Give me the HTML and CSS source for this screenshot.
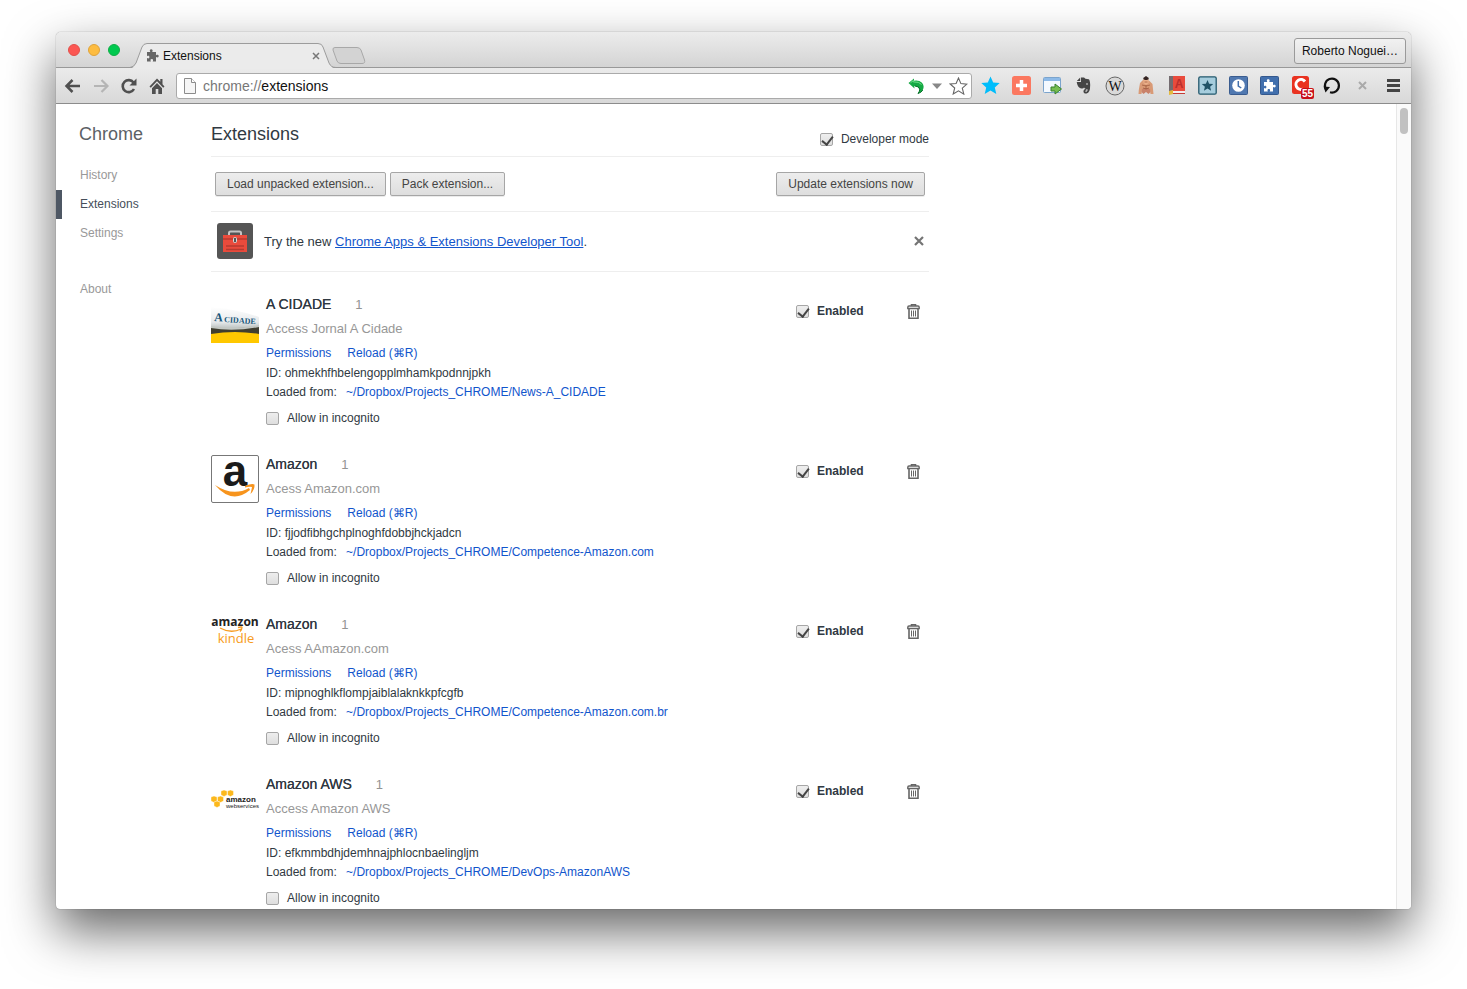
FILE: index.html
```html
<!DOCTYPE html>
<html lang="en">
<head>
<meta charset="utf-8">
<title>Extensions</title>
<link rel="stylesheet" href="styles.css">
</head>
<body>
<svg class="defs" aria-hidden="true">
  <symbol id="trash" viewBox="0 0 13 15">
    <path d="M4.500 2V.8h4V2M2 5v9.200h9V5" fill="none" stroke="#666" stroke-width="1.600"/>
    <path d="M.8 4.500V3.200Q.8 2 2 2h9q1.200 0 1.200 1.200v1.300z" fill="#fff" stroke="#666" stroke-width="1.400"/>
    <path d="M4.500 6.500v6M6.500 6.500v6M8.500 6.500v6" stroke="#666"/>
  </symbol>
  <symbol id="puzzle" viewBox="0 0 13 13">
    <path d="M1 3h3.300C3.300 1.200 4 .3 5.200.3S7.200 1.200 6.200 3H10v3.200c1.800-1 2.700-.3 2.700.9S11.800 9 10 8v4.500H6.700c.9-1.700.2-2.500-.9-2.500s-1.800.8-.9 2.500H1V9c1.700.9 2.400.2 2.400-.9S2.700 6.300 1 7.200z"/>
  </symbol>
</svg>
<div class="window">
  <header class="tabstrip">
    <div class="lights"><i class="light red"></i><i class="light amber"></i><i class="light green"></i></div>
    <div class="tab">
      <svg class="tab-shape" viewBox="0 0 206 26" aria-hidden="true"><path d="M0 25.500Q4 25 6 20L12 4Q13.500.5 17 .5H188Q192 .5 193 4L199 20Q201 25 206 25.500V26H0z" fill="#ebebeb"/><path d="M0 24.500Q4 24 6 20L12 4Q13.500.5 17 .5H188Q192 .5 193 4L199 20Q201 24.500 206 24.500" fill="none" stroke="#9c9c9c"/></svg>
      <svg class="tab-icon" width="13" height="13" fill="#666" aria-hidden="true"><use href="#puzzle"/></svg>
      <span class="tab-title">Extensions</span>
      <button class="tab-close" aria-label="Close tab"><svg width="8" height="8" viewBox="0 0 8 8"><path d="M1 1l6 6M7 1L1 7" stroke="#777" stroke-width="1.500"/></svg></button>
    </div>
    <button class="new-tab" aria-label="New tab"><svg width="34" height="17" viewBox="0 0 34 17"><path d="M3 .5H25Q28 .5 29 3L32.500 13Q33.500 16.500 30 16.500H9Q6 16.500 5 14L1 3Q.5.500 3 .5z" fill="#d3d3d3" stroke="#a8a8a8"/></svg></button>
    <button class="profile">Roberto Noguei…</button>
  </header>

  <nav class="toolbar" aria-label="Toolbar">
    <button class="nav-btn" aria-label="Back"><svg width="18" height="16" viewBox="0 0 18 16"><path d="M16 8H3M8.500 2L2.500 8l6 6" fill="none" stroke="#505050" stroke-width="2.500"/></svg></button>
    <button class="nav-btn" aria-label="Forward"><svg width="18" height="16" viewBox="0 0 18 16"><path d="M2 8h13M9.500 2l6 6-6 6" fill="none" stroke="#b5b5b5" stroke-width="2.200"/></svg></button>
    <button class="nav-btn" aria-label="Reload"><svg width="18" height="16" viewBox="0 0 18 16"><path d="M14 11a6 6 0 1 1-.5-6.500" fill="none" stroke="#505050" stroke-width="2.600"/><path d="M16.500.5v7h-7z" fill="#505050"/></svg></button>
    <button class="nav-btn" aria-label="Home"><svg width="18" height="16" viewBox="0 0 18 16"><path d="M9 .5L1.500 8.500l1.300 1.200L9 3.200l6.200 6.500 1.300-1.200-2-2.200V1h-2.200v2.800zM9 5L4 10.200V16h3.700v-5h2.600v5H14v-5.800z" fill="#505050"/></svg></button>
    <div class="omnibox">
      <svg width="12" height="16" viewBox="0 0 12 16" aria-hidden="true"><path d="M.5.500h7l4 4v11H.5z" fill="#f6f6f6" stroke="#8c8c8c"/><path d="M7.500.5v4h4" fill="#fff" stroke="#8c8c8c"/></svg>
      <a class="url" href="#extensions"><span>chrome://</span>extensions</a>
      <button class="box-btn" aria-label="Undo"><svg width="17" height="16" viewBox="0 0 17 16"><path d="M.5 5L6 .5v2.300q5-.8 8 2 2.800 3.200.8 7.200-1.500 2.700-4.800 3.500 2-2.300 1.300-4.500Q10.300 8 6.300 8l.2 2.500z" fill="#15a944"/><path d="M2.500 4.800L5.300 2.500v1.400q6-.5 8.200 2.600" fill="none" stroke="#74e08c"/><path d="M7 8q4 .2 4.800 3.200-.2 2.500-1.800 4.300 3.500-1 4.800-3.500" fill="none" stroke="#077028"/></svg></button>
      <button class="box-btn" aria-label="Show more"><svg width="10" height="6" viewBox="0 0 10 6"><path d="M0 .5h10L5 6z" fill="#888"/></svg></button>
      <button class="box-btn" aria-label="Bookmark this page"><svg width="19" height="18" viewBox="0 0 19 18"><path d="M9.500 1l2.400 5.600 6 .5-4.600 4 1.500 6-5.300-3.300L4.200 17l1.500-6-4.600-4 6-.5z" fill="#fff" stroke="#666" stroke-width="1.100"/></svg></button>
    </div>
    <div class="actions">
      <button aria-label="Favorite"><svg width="19" height="19" viewBox="0 0 19 19"><path d="M9.500.5l2.700 6 6.500.6-4.900 4.400 1.500 6.600-5.800-3.500-5.800 3.500 1.500-6.600L.3 7.100l6.500-.6z" fill="#00bdfb"/></svg></button>
      <button aria-label="Add"><svg width="19" height="19" viewBox="0 0 19 19"><rect width="19" height="19" rx="2.500" fill="#fb7860"/><path d="M9.500 4v11M4 9.500h11" stroke="#fff" stroke-width="3.500"/></svg></button>
      <button aria-label="Open window"><svg width="20" height="18" viewBox="0 0 20 18"><rect x=".5" y=".5" width="17" height="15" rx="1" fill="#f4f9ff" stroke="#7ba4cd"/><path d="M1 1h16v3H1z" fill="#8dbae8"/><path d="M8 10h4V7l6.500 5-6.500 5v-3H8z" fill="#76bd50" stroke="#38802d"/></svg></button>
      <button aria-label="Evernote"><svg width="15" height="17" viewBox="0 0 15 17"><path d="M4.200.5L.8 4h3.400zM5 .5h3l1.500 1.200 3.200.6Q14 3 14.200 8q0 8-3.700 8.500-3.500.2-3-2.800.7-2.200 3-1.400v1.200q-1.300-.3-1.300.6 0 1 1.600.5.900-.7.700-2.400Q8.500 12 8 10.500 7.500 12 4.500 11.200 1.500 10.500.7 5H5z" fill="#454545"/><circle cx="11" cy="7" r="1" fill="#aaa"/></svg></button>
      <button aria-label="Wikipedia"><svg width="20" height="20" viewBox="0 0 20 20"><circle cx="10" cy="10" r="9" fill="#d9d9d9" stroke="#666"/><text x="10" y="15" text-anchor="middle" class="w-mark">W</text></svg></button>
      <button aria-label="Sumo"><svg width="16" height="19" viewBox="0 0 16 19"><path d="M5 4L2 7 .8 14l-.3 4h3L4 14h8l.5 4h3L14.500 8 11 4.500z" fill="#d99a76"/><path d="M5.500 3h5v4l-2.500 2-2.500-2z" fill="#ebb08a"/><path d="M5 3Q6 1 8 0q2 1 3 3L9 4H7z" fill="#332321"/><path d="M4 13l4-1 4 1 .5 3-2 2-2.500-2-2.500 2-2-2z" fill="#c9826a"/><path d="M6.500 6h3M4 9q4 2 8 0M8 9v4M5 12q3 2 6 0" fill="none" stroke="#9a5438" stroke-width=".7"/></svg></button>
      <button aria-label="Dictionary"><svg width="17" height="19" viewBox="0 0 17 19"><path d="M1 0h4v16H1z" fill="#746c70"/><path d="M5 0h12v15H5z" fill="#e94b3d"/><path d="M5 15h12v2H5z" fill="#f4eeee"/><path d="M3 17.500h14" stroke="#c43b35"/><path d="M1 15l4-1v4L1 19z" fill="#e4ba3d"/><text x="11" y="12" text-anchor="middle" class="a-mark">A</text></svg></button>
      <button aria-label="Bookmarks"><svg width="19" height="19" viewBox="0 0 19 19"><rect x=".8" y=".8" width="17.400" height="17.400" rx="1.500" fill="#a6cddd" stroke="#24596d" stroke-width="1.300"/><path d="M9.500 4l1.600 3.800 4.100.3-3.100 2.700 1 4-3.600-2.200-3.600 2.200 1-4-3.100-2.700 4.100-.3z" fill="#215367"/></svg></button>
      <button aria-label="History"><svg width="19" height="19" viewBox="0 0 19 19"><rect x=".5" y=".5" width="18" height="18" rx="1" fill="#5078b0" stroke="#3a5c8f"/><circle cx="9.500" cy="9.500" r="6.300" fill="#fff"/><path d="M9.300 5v5l3 2" fill="none" stroke="#4470ac" stroke-width="1.500"/></svg></button>
      <button aria-label="Extensions manager"><svg width="19" height="19" viewBox="0 0 19 19"><rect x=".5" y=".5" width="18" height="18" rx="1" fill="#416fad" stroke="#34588d"/><use href="#puzzle" x="3" y="3" width="13" height="13" fill="#fff"/></svg></button>
      <button class="has-badge" aria-label="Notifications, 55"><svg width="19" height="19" viewBox="0 0 19 19"><rect x="1" width="17" height="18" rx="2.500" fill="#e93321"/><path d="M14 5.500A5 5 0 1 0 12 13" fill="none" stroke="#fff" stroke-width="3"/></svg><span class="badge">55</span></button>
      <button aria-label="Refresh"><svg width="19" height="19" viewBox="0 0 19 19"><path d="M4.500 14A7 7 0 1 1 8 16.300" fill="none" stroke="#111" stroke-width="2.200"/><path d="M1.500 10.500L8 11l-4.500 5.500z" fill="#111"/></svg></button>
      <button aria-label="Stop"><svg width="9" height="9" viewBox="0 0 9 9"><path d="M1 1l7 7M8 1L1 8" stroke="#aaa" stroke-width="2"/></svg></button>
      <button aria-label="Menu"><svg width="13" height="13" viewBox="0 0 13 13"><path d="M0 1.500h13M0 6.500h13M0 11.500h13" stroke="#444" stroke-width="2.800"/></svg></button>
    </div>
  </nav>

  <div class="page">
    <aside class="sidebar">
      <h1>Chrome</h1>
      <ul>
        <li><a href="#history">History</a></li>
        <li class="current"><a href="#extensions">Extensions</a></li>
        <li><a href="#settings">Settings</a></li>
        <li class="about"><a href="#about">About</a></li>
      </ul>
    </aside>
    <main class="content" id="extensions">
      <div class="page-head">
        <h2>Extensions</h2>
        <label class="dev-mode"><input type="checkbox" checked>Developer mode</label>
      </div>
      <div class="dev-bar">
        <button class="btn">Load unpacked extension...</button>
        <button class="btn">Pack extension...</button>
        <button class="btn update">Update extensions now</button>
      </div>
      <div class="promo">
        <svg width="36" height="36" viewBox="0 0 36 36" aria-hidden="true"><rect width="36" height="36" rx="3" fill="#555"/><path d="M12 13V10q0-1.500 1.500-1.500h9q1.500 0 1.500 1.500v3" fill="none" stroke="#c4c4c4" stroke-width="2"/><path d="M6 12h24v17H6z" fill="#ea4b3c"/><path d="M6 16h24" stroke="#9d332a"/><path d="M9 23h18M9 26.500h18" stroke="#b73b30" stroke-width="1.500"/><rect x="16.500" y="14.500" width="3" height="5" rx="1" fill="#555" stroke="#ddd"/></svg>
        <p>Try the new <a href="#tool">Chrome Apps &amp; Extensions Developer Tool</a>.</p>
        <button class="icon-btn" aria-label="Dismiss"><svg width="10" height="10" viewBox="0 0 10 10"><path d="M1 1l8 8M9 1L1 9" stroke="#747474" stroke-width="2.200"/></svg></button>
      </div>

      <div class="list">
        <article class="ext">
          <svg class="logo" viewBox="0 0 48 48" aria-hidden="true"><defs><linearGradient id="sky" x2="0" y2="1"><stop offset="0" stop-color="#fff"/><stop offset=".6" stop-color="#e6eaec"/><stop offset="1" stop-color="#a5aca8"/></linearGradient></defs><path d="M0 12q25 2 48 10v15H0z" fill="url(#sky)"/><path d="M0 32q24 3 48-1v10H0z" fill="#3f3e30"/><path d="M0 32q22 4 48-1" stroke="#c3c8c4" stroke-width="2" fill="none"/><path d="M0 39q24-4 48 0v9H0z" fill="#ffc800"/><g class="cidade"><text x="3" y="26" font-size="12" transform="rotate(4 3 26)">A</text><text x="13" y="27" font-size="8" transform="rotate(4 13 27)">CIDADE</text></g></svg>
          <div class="info">
            <h3>A CIDADE <span class="version">1</span></h3>
            <p class="desc">Access Jornal A Cidade</p>
            <p class="links"><a href="#p1">Permissions</a><a href="#r1">Reload (⌘R)</a></p>
            <p class="id">ID: ohmekhfhbelengopplmhamkpodnnjpkh</p>
            <p class="path">Loaded from: <a href="#l1">~/Dropbox/Projects_CHROME/News-A_CIDADE</a></p>
            <label class="incognito"><input type="checkbox">Allow in incognito</label>
          </div>
          <div class="controls"><label><input type="checkbox" checked>Enabled</label><button class="icon-btn" aria-label="Remove"><svg width="13" height="15"><use href="#trash"/></svg></button></div>
        </article>

        <article class="ext">
          <svg class="logo" viewBox="0 0 48 48" aria-hidden="true"><rect x=".5" y=".5" width="47" height="47" rx="1.500" fill="#fff" stroke="#777"/><text x="24" y="31" text-anchor="middle" class="amazon-a">a</text><path d="M4 30q18 12 34 3l1 2Q21 50 4 30z" fill="#f7941d"/><path d="M34 31q7-3 9.500-1.500.5 5-4 9.500 1-4 1.500-7-3-.5-7 .5z" fill="#f7941d"/></svg>
          <div class="info">
            <h3>Amazon <span class="version">1</span></h3>
            <p class="desc">Acess Amazon.com</p>
            <p class="links"><a href="#p2">Permissions</a><a href="#r2">Reload (⌘R)</a></p>
            <p class="id">ID: fjjodfibhgchplnoghfdobbjhckjadcn</p>
            <p class="path">Loaded from: <a href="#l2">~/Dropbox/Projects_CHROME/Competence-Amazon.com</a></p>
            <label class="incognito"><input type="checkbox">Allow in incognito</label>
          </div>
          <div class="controls"><label><input type="checkbox" checked>Enabled</label><button class="icon-btn" aria-label="Remove"><svg width="13" height="15"><use href="#trash"/></svg></button></div>
        </article>

        <article class="ext">
          <svg class="logo" viewBox="0 0 48 48" aria-hidden="true"><text x="24" y="11" text-anchor="middle" class="kindle-top">amazon</text><path d="M9 13q11 6 21 1M27 12.500q4-1 4 0 0 2-2 4" fill="none" stroke="#f79b20" stroke-width="1.300"/><text x="25" y="28" text-anchor="middle" class="kindle">kindle</text></svg>
          <div class="info">
            <h3>Amazon <span class="version">1</span></h3>
            <p class="desc">Acess AAmazon.com</p>
            <p class="links"><a href="#p3">Permissions</a><a href="#r3">Reload (⌘R)</a></p>
            <p class="id">ID: mipnoghlkflompjaiblalaknkkpfcgfb</p>
            <p class="path">Loaded from: <a href="#l3">~/Dropbox/Projects_CHROME/Competence-Amazon.com.br</a></p>
            <label class="incognito"><input type="checkbox">Allow in incognito</label>
          </div>
          <div class="controls"><label><input type="checkbox" checked>Enabled</label><button class="icon-btn" aria-label="Remove"><svg width="13" height="15"><use href="#trash"/></svg></button></div>
        </article>

        <article class="ext">
          <svg class="logo" viewBox="0 0 48 48" aria-hidden="true"><g fill="#fcb81c" stroke="#fff" stroke-width=".4"><path id="cube" d="M10 16l3-1 3 1v4l-3 1.500-3-1.500z"/><use href="#cube" x="6.500"/><use href="#cube" x="-10" y="6"/><use href="#cube" x="-3.500" y="6"/><use href="#cube" x="-7" y="11"/></g><text x="15" y="27" class="aws-top">amazon</text><text x="15" y="33" class="aws">webservices</text></svg>
          <div class="info">
            <h3>Amazon AWS <span class="version">1</span></h3>
            <p class="desc">Access Amazon AWS</p>
            <p class="links"><a href="#p4">Permissions</a><a href="#r4">Reload (⌘R)</a></p>
            <p class="id">ID: efkmmbdhjdemhnajphlocnbaelingljm</p>
            <p class="path">Loaded from: <a href="#l4">~/Dropbox/Projects_CHROME/DevOps-AmazonAWS</a></p>
            <label class="incognito"><input type="checkbox">Allow in incognito</label>
          </div>
          <div class="controls"><label><input type="checkbox" checked>Enabled</label><button class="icon-btn" aria-label="Remove"><svg width="13" height="15"><use href="#trash"/></svg></button></div>
        </article>
      </div>
    </main>
    <div class="scrollbar"><div class="thumb"></div></div>
  </div>
</div>
</body>
</html>
```
FILE: styles.css
```css
* { box-sizing: border-box; }

body {
  display: flex;
  height: 100vh;
  margin: 0;
  padding: 32px 56px 80px;
  overflow: hidden;
  background: #fff;
  color: #303942;
  font: 12px/18px "Liberation Sans", Arial, sans-serif;
}

h1, h2, h3, p, ul { margin: 0; padding: 0; font-weight: normal; }
ul { list-style: none; }
a { color: #15c; text-decoration: none; }
svg { display: block; flex: none; }
.defs { position: absolute; width: 0; height: 0; }

button {
  margin: 0;
  padding: 0;
  border: 0;
  background: none;
  color: inherit;
  font: inherit;
}

.window {
  display: flex;
  flex: 1;
  flex-direction: column;
  min-width: 0;
  overflow: hidden;
  border-radius: 5px 5px 4px 4px;
  background: #fff;
  box-shadow: 0 0 1px rgba(0, 0, 0, .6), 0 22px 50px rgba(0, 0, 0, .6);
}

/* Tab strip */
.tabstrip {
  display: flex;
  flex: none;
  align-items: flex-end;
  height: 36px;
  border-bottom: 1px solid #999;
  background: linear-gradient(#ececec, #d4d4d4);
}
.lights { display: flex; gap: 8px; align-self: center; padding: 0 10px 0 12px; }
.light { width: 12px; height: 12px; border: 1px solid; border-radius: 50%; }
.red { background: #fc5753; border-color: #e2504b; }
.amber { background: #fdbc40; border-color: #dfa33a; }
.green { background: #00c94f; border-color: #0fae46; }
.tab {
  position: relative;
  display: flex;
  align-items: center;
  width: 206px;
  height: 25px;
  margin-bottom: -1px;
  padding: 0 16px;
  color: #111;
}
.tab-shape { position: absolute; inset: 0; width: 100%; height: 26px; }
.tab-icon, .tab-title, .tab-close { position: relative; }
.tab-title { flex: 1; padding-left: 4px; }
.new-tab { margin: 0 0 3px -4px; }
.profile {
  align-self: center;
  height: 26px;
  margin: 2px 5px 0 auto;
  padding: 0 7px;
  border: 1px solid #9a9a9a;
  border-radius: 3px;
  background: linear-gradient(#f1f1f1, #e0e0e0);
  color: #111;
}

/* Toolbar */
.toolbar {
  display: flex;
  flex: none;
  align-items: center;
  height: 36px;
  padding: 0 2px 0 3px;
  border-bottom: 1px solid #8c8c8c;
  background: linear-gradient(#ebebeb, #d8d8d8);
}
.nav-btn { display: flex; justify-content: center; width: 28px; }
.omnibox {
  display: flex;
  flex: 1;
  align-items: center;
  gap: 7px;
  height: 26px;
  margin: 0 3px 0 5px;
  padding: 0 3px 0 7px;
  border: 1px solid #aaa;
  border-radius: 3px;
  background: #fff;
}
.url { flex: 1; color: #111; font-size: 14px; }
.url span { color: #777; }
.actions { display: grid; grid-template-columns: repeat(14, 31px); align-items: center; }
.actions button { display: flex; justify-content: center; }
.has-badge { position: relative; }
.badge {
  position: absolute;
  top: 12px;
  right: 2px;
  padding: 0 1px;
  border-radius: 2px;
  background: #c8101c;
  color: #fff;
  font: bold 10px/11px "Liberation Sans", Arial, sans-serif;
}
.w-mark { font: 14px "Liberation Serif", serif; fill: #111; }
.a-mark { font: bold 12px "Liberation Sans", sans-serif; fill: #bb2f2c; }

/* Page */
.page { display: flex; flex: 1; min-height: 0; overflow: hidden; }
.sidebar { flex: none; width: 155px; padding-top: 18px; }
.sidebar h1 { padding-left: 23px; color: #5c6166; font-size: 18px; line-height: 24px; }
.sidebar ul { padding-top: 15px; }
.sidebar li { padding-left: 18px; border-left: 6px solid transparent; line-height: 29px; }
.sidebar a { color: #999; }
.sidebar .current { border-color: #4e5764; }
.sidebar .current a { color: #464e5a; }
.sidebar .about { margin-top: 27px; }

.content { flex: 0 1 718px; min-width: 0; }
.page-head {
  display: flex;
  align-items: flex-end;
  justify-content: space-between;
  height: 53px;
  padding-bottom: 8px;
  border-bottom: 1px solid #eee;
}
.page-head h2 { padding-bottom: 2px; font-size: 18px; line-height: 24px; }
label { display: flex; align-items: center; }
input[type="checkbox"] {
  appearance: none;
  width: 13px;
  height: 13px;
  margin: 1px 8px 0 0;
  border: 1px solid #a6a6a6;
  border-radius: 2px;
  background: linear-gradient(#eee, #dedede);
}
input[type="checkbox"]:checked::after {
  content: "";
  display: block;
  width: 5px;
  height: 9px;
  margin: 0 0 0 3px;
  border: solid #444;
  border-width: 0 2px 2px 0;
  transform: rotate(38deg);
}
.dev-bar {
  display: flex;
  gap: 4px;
  padding: 15px 4px;
  border-bottom: 1px solid #eee;
}
.btn {
  height: 24px;
  padding: 0 11px;
  border: 1px solid #a6a6a6;
  border-radius: 2px;
  background: linear-gradient(#ededed, #dedede);
  box-shadow: 0 1px 0 rgba(0, 0, 0, .08);
  color: #444;
}
.update { margin-left: auto; }
.promo {
  display: flex;
  align-items: center;
  gap: 11px;
  padding: 11px 5px 12px 6px;
  border-bottom: 1px solid #eee;
  font-size: 13px;
}
.promo p { flex: 1; padding-top: 2px; }
.promo a { text-decoration: underline; }

.list { display: grid; gap: 28px; padding-top: 23px; }
.ext { display: flex; }
.logo { width: 48px; height: 48px; margin-right: 7px; overflow: visible; }
.info { flex: 1; min-width: 0; }
.info h3 { height: 18px; font-size: 14px; text-shadow: 0 0 0 #303942; }
.version { padding-left: 20px; color: #939393; font-size: 13px; line-height: 14px; text-shadow: none; }
.desc { margin: 6px 0 4px; color: #979797; font-size: 13px; line-height: 20px; }
.links, .id { line-height: 20px; }
.links a { margin-right: 16px; }
.path a { margin-left: 6px; }
.incognito { margin-top: 8px; }
.controls { display: flex; justify-content: space-between; width: 133px; height: 32px; padding-right: 9px; font-weight: bold; }
.controls label { height: 32px; }

.scrollbar { flex: none; width: 15px; margin-left: auto; padding: 4px 3px; border-left: 1px solid #e7e7e7; background: #fafafa; }
.thumb { width: 8px; height: 26px; border-radius: 4px; background: #c1c1c1; }

/* Extension logos */
.cidade { font-family: "Liberation Serif", serif; font-weight: bold; fill: #155579; }
.amazon-a { font: bold 44px "Liberation Sans", sans-serif; fill: #1b1b1b; }
.kindle-top { font: bold 12px "Open Sans", sans-serif; fill: #222; }
.kindle { font: 13px "Open Sans", sans-serif; fill: #f79b20; }
.aws-top { font: bold 8px "Liberation Sans", sans-serif; fill: #222; }
.aws { font: 6px "Liberation Sans", sans-serif; fill: #222; }
```
